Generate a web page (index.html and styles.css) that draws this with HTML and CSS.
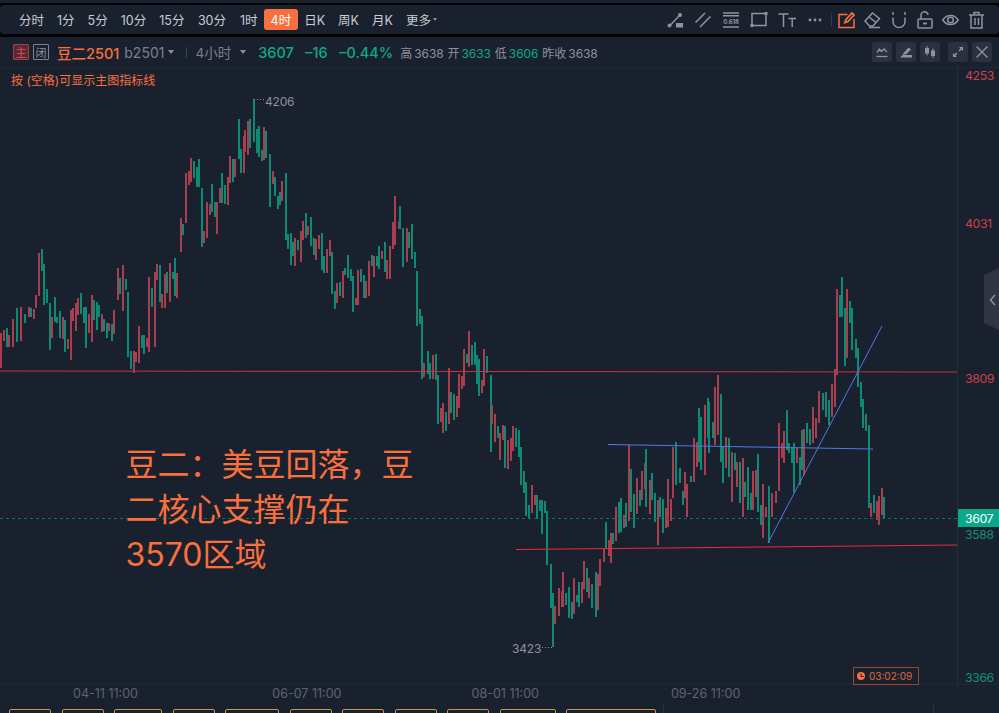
FILE: index.html
```html
<!DOCTYPE html>
<html lang="zh-CN">
<head>
  <meta charset="UTF-8" />
  <title>豆二2501 4小时</title>
  <link rel="stylesheet" href="styles.css">
</head>
<body>
  <div class="page">
    <div class="strip"></div>

    <!-- 周期 + 画线工具 -->
    <div class="toolbar">
      <div class="periods">
        <span class="period">分时</span>
        <span class="period">1分</span>
        <span class="period">5分</span>
        <span class="period">10分</span>
        <span class="period">15分</span>
        <span class="period">30分</span>
        <span class="period">1时</span>
        <span class="period active">4时</span>
        <span class="period">日K</span>
        <span class="period">周K</span>
        <span class="period">月K</span>
        <span class="period">更多<i class="caret small"></i></span>
      </div>
      <div class="tools">
        <div class="tool-group">
          <svg class="tool" width="16" height="16" viewBox="0 0 16 16"><path d="M3 13.500L12.500 3.500" /><circle class="solid" cx="2.500" cy="13.500" r="2" /><circle class="solid" cx="13" cy="3" r="2" /><rect class="solid" x="9" y="11" width="7" height="4.500" /></svg>
          <svg class="tool" width="16" height="16" viewBox="0 0 16 16"><path d="M0.500 10.500L10 1M5 15L15.500 4.500" /></svg>
          <svg class="tool" width="16" height="16" viewBox="0 0 16 16"><path d="M0 1h16M0 3.800h16M0 15h16" /><text class="fib" x="8" y="11.500">0.618</text></svg>
          <svg class="tool" width="18" height="17" viewBox="0 0 18 17"><rect x="2" y="2.500" width="14" height="12" /><rect class="solid" x="0.500" y="13" width="3" height="3" /><rect class="solid" x="14.500" y="1" width="3" height="3" /></svg>
          <svg class="tool" width="18" height="16" viewBox="0 0 18 16"><path d="M0.500 2h10M5.500 2v13M10.500 6.500h7.500M14.200 6.500v8.500" /></svg>
          <svg class="tool" width="14" height="16" viewBox="0 0 14 16"><circle class="solid" cx="2" cy="8" r="1.400" /><circle class="solid" cx="7" cy="8" r="1.400" /><circle class="solid" cx="12" cy="8" r="1.400" /></svg>
        </div>
        <i class="tools-divider"></i>
        <div class="tool-group second">
          <svg class="tool hot" width="18" height="18" viewBox="0 0 18 18"><path d="M9.500 3.500H1v13h15V8" /><path class="fat" d="M7 11.500l1-3 6-6.500 2 2-6 6.500z" /></svg>
          <svg class="tool" width="17" height="18" viewBox="0 0 17 18"><path d="M1 10l7.500-8 7 5.500-6.500 7.500H5.500z" /><path d="M5 6l7 5.500M5 16.500h11" /></svg>
          <svg class="tool" width="14" height="18" viewBox="0 0 14 18"><path d="M1 1v3M13 1v3" /><path d="M1 6.500v4a6 6 0 0 0 12 0v-4" /></svg>
          <svg class="tool" width="16" height="18" viewBox="0 0 16 18"><rect x="1" y="8" width="14" height="9" rx="1" /><path d="M4 8V4.500a3.500 3.500 0 0 1 7-0.500" /><path class="fat" d="M6 12.500h4" /></svg>
          <svg class="tool" width="17" height="18" viewBox="0 0 17 18"><path d="M0.800 9c4-6 11.400-6 15.400 0-4 6-11.400 6-15.400 0z" /><circle cx="8.500" cy="9" r="2.800" /></svg>
          <svg class="tool" width="15" height="18" viewBox="0 0 15 18"><path d="M0 4h15M5 4V1.500h5V4M2 4v13h11V4M6 7v7M9.500 7v7" /></svg>
        </div>
      </div>
    </div>

    <div class="panel">
      <!-- 合约行情 -->
      <div class="quote">
        <span class="badge red">主</span>
        <span class="badge grey">闭</span>
        <span class="name">豆二2501</span>
        <span class="code">b2501</span><i class="caret"></i>
        <i class="quote-divider"></i>
        <span class="span-label">4小时</span><i class="caret wide"></i>
        <strong class="last">3607</strong>
        <strong class="change">–16</strong>
        <strong class="percent">–0.44%</strong>
        <span class="stats">
          <span>高<em>3638</em></span>
          <span>开<em class="down">3633</em></span>
          <span>低<em class="down">3606</em></span>
          <span>昨收<em>3638</em></span>
        </span>
        <span class="quote-btns">
          <span class="qbtn"><svg width="12" height="12" viewBox="0 0 12 12"><path d="M1 6.500l2.500-3.500 2 2.500L8 3l3 3" /><path d="M0.500 10.500h11" /></svg></span>
          <span class="qbtn"><svg width="12" height="12" viewBox="0 0 12 12"><path class="fill" d="M4 6.500l4.500-5 2.500 2-5 5H2.500zM0 11.500l2.500-2.500H12v2.500z" /></svg></span>
          <span class="qbtn"><svg width="12" height="12" viewBox="0 0 12 12"><path class="fill" d="M2.500 0h1v2H5v5.500H3.500v2h-1v-2H1V2h1.500zM8.500 2.500h1v2H11V10H9.500v2h-1v-2H7V4.500h1.500z" /></svg></span>
          <span class="qbtn gap"><svg width="12" height="12" viewBox="0 0 12 12"><path class="fill" d="M11 1v4L9.500 3.500 7.500 5.500 6.500 4.500l2-2L7 1zM1 11V7l1.500 1.500 2-2 1 1-2 2L5 11z" /></svg></span>
          <span class="qbtn"><svg width="12" height="12" viewBox="0 0 12 12"><path d="M0.500 0.500l11 11M11.500 0.500l-11 11" /></svg></span>
        </span>
      </div>

      <!-- K线图 -->
      <div class="chart">
        <svg class="plot" width="999" height="617" viewBox="0 68 999 617">
          <g id="candles"></g>
          <line class="last-line" x1="0" y1="518.500" x2="957" y2="518.500" />
          <line class="level" x1="0" y1="371" x2="957" y2="372" />
          <line class="level bright" x1="516" y1="549.500" x2="957" y2="545" />
          <line class="trend" x1="608" y1="444.500" x2="873" y2="449" />
          <line class="trend" x1="768" y1="543" x2="882" y2="326" />

          <line class="dots" x1="254" y1="99.500" x2="264" y2="99.500" />
          <text class="mark" x="265" y="106">4206</text>
          <line class="dots" x1="542" y1="647.500" x2="553" y2="647.500" />
          <text class="mark" x="512" y="653">3423</text>

          <!-- 价格轴 -->
          <line class="axis-line" x1="957.500" y1="68" x2="957.500" y2="685" />
          <text class="price up" x="965" y="80">4253</text>
          <text class="price up" x="965" y="228">4031</text>
          <text class="price up" x="965" y="383">3809</text>
          <text class="price down" x="965" y="539">3588</text>
          <text class="price down" x="965" y="682">3366</text>
          <rect class="last-tag" x="958" y="509" width="41" height="18" />
          <text class="last-text" x="965" y="522.500">3607</text>

          <!-- 右侧收起 -->
          <path class="drawer" d="M984 275L999 268V330L984 323Z" />
          <path class="drawer-arrow" d="M995 295l-4.500 5 4.500 5" />

          <!-- 倒计时 -->
          <rect class="timer" x="853.500" y="667.500" width="65" height="17" />
          <circle class="timer-dot" cx="861" cy="676" r="4" />
          <path class="timer-hand" d="M861 673.500V676.500H863.500" />
          <text class="timer-text" x="869" y="680">03:02:09</text>
        </svg>
        <p class="hint">按 (空格)可显示主图指标线</p>
        <p class="note">豆二：美豆回落，豆二核心支撑仍在3570区域</p>
      </div>

      <div class="timeline">
        <span>04-11 11:00</span>
        <span>06-07 11:00</span>
        <span>08-01 11:00</span>
        <span>09-26 11:00</span>
      </div>

      <div class="tabs">
        <i class="tab"></i><i class="tab"></i><i class="tab"></i><i class="tab"></i>
        <i class="tab"></i><i class="tab"></i><i class="tab"></i><i class="tab"></i>
        <i class="tab"></i><i class="tab"></i><i class="tab"></i>
        <i class="tabs-divider first"></i>
        <i class="tabs-divider"></i>
      </div>
    </div>
  </div>

  <script src="chart.js"></script>
</body>
</html>
```

FILE: styles.css
```css
/* Reset & base */
* {
  box-sizing: border-box;
}
body {
  margin: 0;
  background: #000;
  color: #8d929b;
  font-family: Inter, "Noto Sans CJK SC", sans-serif;
  overflow: hidden;
}
i, em {
  font-style: normal;
}

.page {
  display: flex;
  flex-direction: column;
  width: 999px;
  height: 713px;
  overflow: hidden;
}
.strip {
  height: 3px;
  background: #1a212e;
}

/* Toolbar */
.toolbar {
  display: flex;
  align-items: center;
  justify-content: space-between;
  height: 29px;
  margin-top: 2px;
  padding: 0 9.500px 0 12.500px;
  background: #1a212e;
  border-radius: 4px;
}
.periods {
  display: flex;
  align-items: center;
}
.period {
  display: flex;
  align-items: center;
  height: 21px;
  padding: 0 6.500px;
  font-size: 12.500px;
  color: #c9ccd1;
  white-space: nowrap;
}
.period:nth-child(6) {
  margin-left: 0.500px;
}
.period:nth-child(7) {
  margin-left: 1px;
}
.period.active {
  background: #f96f3d;
  border-radius: 3px;
  color: #fff;
}
.caret {
  display: inline-block;
  margin-left: 4px;
  border: 3px solid transparent;
  border-top: 4px solid #8d929b;
  border-bottom: 0;
}
.caret.small {
  margin-left: 2px;
  border-width: 3px 2.500px 0;
}
.caret.wide {
  margin-left: 9px;
}

.tools {
  display: flex;
  align-items: center;
}
.tool-group {
  display: grid;
  grid-auto-flow: column;
  grid-auto-columns: 28px;
  justify-items: center;
  align-items: center;
}
.tool-group.second {
  grid-auto-columns: 26px;
}
.tool {
  fill: none;
  stroke: #8f949d;
  stroke-width: 1.500;
}
.tool .solid {
  fill: #8f949d;
  stroke: none;
}
.tool .fib {
  fill: #8f949d;
  stroke: none;
  font-size: 6px;
  font-weight: 700;
  letter-spacing: -0.100px;
  text-anchor: middle;
}
.tool.hot {
  stroke: #f96f3d;
}
.tool .fat {
  stroke-width: 1.800;
}
.tools-divider {
  width: 1px;
  height: 13px;
  margin: 0 2px;
  background: #333b48;
}

/* Quote row */
.panel {
  flex: 1;
  display: flex;
  flex-direction: column;
  margin-top: 3px;
  background: #1a212e;
  min-height: 0;
}
.quote {
  display: flex;
  align-items: center;
  flex: none;
  height: 31px;
  padding-left: 13px;
  border-bottom: 1px solid #1f2835;
  white-space: nowrap;
}
.badge {
  display: flex;
  align-items: center;
  justify-content: center;
  width: 16px;
  height: 16px;
  margin-right: 4px;
  font-size: 11px;
  border: 1px solid;
  border-radius: 1px;
}
.badge.red {
  background: #5a2a33;
  border-color: #a83c48;
  color: #d9545f;
}
.badge.grey {
  border-color: #7d828b;
  color: #8d929b;
}
.name {
  margin-left: 4px;
  font-size: 14.500px;
  font-weight: 500;
  color: #f96f3d;
}
.code {
  margin-left: 5px;
  font-size: 14px;
  color: #7b808a;
}
.quote-divider {
  width: 1px;
  height: 11px;
  margin: 0 8px 0 12px;
  background: #3a424f;
}
.span-label {
  font-size: 13.500px;
  color: #7b808a;
}
.last, .change, .percent {
  margin-left: 11.500px;
  font-size: 14.500px;
  font-weight: 500;
  color: #0ea78a;
}
.last {
  margin-left: 12px;
}
.stats {
  display: flex;
  gap: 4px;
  margin-left: 7px;
  font-size: 12px;
  color: #8d929b;
}
.stats em {
  margin-left: 2px;
  letter-spacing: -0.100px;
}
.stats .down {
  color: #0ea78a;
}
.quote-btns {
  display: flex;
  gap: 4px;
  margin-left: auto;
  padding-right: 7px;
}
.qbtn {
  display: flex;
  align-items: center;
  justify-content: center;
  width: 20px;
  height: 20px;
  background: #2a3240;
  border-radius: 3px;
}
.qbtn.gap {
  margin-left: 4px;
}
.qbtn svg {
  fill: none;
  stroke: #8f949d;
  stroke-width: 1.300;
}
.qbtn .fill {
  fill: #8f949d;
  stroke: none;
}

/* Chart */
.chart {
  position: relative;
  flex: none;
  height: 617px;
  border-bottom: 1px solid #1f2835;
}
.plot {
  display: block;
  font-family: Inter, sans-serif;
}
.bar-r {
  fill: #a83f4e;
}
.bar-g {
  fill: #0c8a73;
}
.last-line {
  stroke: #0d6f60;
  stroke-dasharray: 3 3;
}
.level {
  stroke: #c83245;
}
.level.bright {
  stroke: #ee2a3e;
}
.trend {
  stroke: #5179e6;
}
.dots {
  stroke: #8d929b;
  stroke-dasharray: 1 2;
}
.mark {
  font-size: 12px;
  letter-spacing: -0.200px;
  fill: #8d929b;
}
.axis-line {
  stroke: #252e3b;
}
.price {
  font-size: 12.300px;
  letter-spacing: -0.400px;
}
.price.up {
  fill: #c8424f;
}
.price.down {
  fill: #0e8f78;
}
.last-tag {
  fill: #0aa88a;
}
.last-text {
  font-size: 12.300px;
  letter-spacing: -0.400px;
  fill: #fff;
}
.drawer {
  fill: #2f3542;
}
.drawer-arrow {
  fill: none;
  stroke: #8f949d;
  stroke-width: 1.500;
}
.timer {
  fill: none;
  stroke: #96492f;
}
.timer-dot {
  fill: #f96f3d;
}
.timer-hand {
  fill: none;
  stroke: #1a212e;
}
.timer-text {
  font-size: 10px;
  fill: #e0683a;
}
.hint {
  position: absolute;
  left: 11px;
  top: 5px;
  margin: 0;
  font-size: 12px;
  line-height: 16px;
  color: #f96f3d;
}
.note {
  position: absolute;
  left: 125.500px;
  top: 374px;
  width: 300px;
  margin: 0;
  font-size: 32px;
  line-height: 45px;
  color: #f96f3d;
}

/* Time axis */
.timeline {
  display: grid;
  grid-template-columns: repeat(4, 199.300px);
  flex: none;
  height: 24px;
  padding-left: 73px;
  font-size: 12.500px;
  line-height: 18px;
  color: #5d6470;
  font-family: Inter, sans-serif;
}

/* Bottom tabs, cut off by the window */
.tabs {
  position: relative;
  display: flex;
  gap: 10.500px;
  flex: 1;
  padding-left: 9px;
}
.tab {
  height: 10px;
  border: 1px solid #c9974a;
  border-radius: 2px 2px 0 0;
  width: 42px;
}
.tab:nth-child(3) { width: 48px; }
.tab:nth-child(5) { width: 54px; }
.tab:nth-child(10) { width: 56px; }
.tab:nth-child(11) { width: 90px; }
.tabs-divider {
  position: absolute;
  left: 933px;
  top: -4px;
  width: 1px;
  height: 10px;
  background: #2c3441;
}
.tabs-divider.first {
  left: 663px;
}
```

FILE: chart.js
```js
// x, top, bottom per bar, read off the picture
const BARS = `
0 333 368 r,3 330 341 r,6 328 347 g,8 335 347 r,12 319 347 r,16 308 342 g,20 307 341 r,24 314 323 g,
28 307 317 r,30 308 317 g,33 309 319 r,35 295 308 r,38 253 296 r,41 249 271 g,43 264 305 g,46 289 303 g,
49 303 350 g,51 317 338 r,54 297 322 g,56 317 323 g,59 311 338 g,62 317 339 r,64 320 352 g,67 339 349 r,
70 310 360 r,72 308 321 r,75 303 331 r,77 298 315 r,80 293 314 g,83 307 323 g,85 307 348 g,88 314 333 r,
91 295 342 r,93 300 320 g,96 302 330 g,98 305 317 g,101 314 332 r,103 319 331 g,106 323 338 g,108 323 331 r,
111 324 341 g,113 310 334 r,117 268 300 r,119 278 294 g,122 265 311 r,125 279 290 g,127 292 357 g,130 351 369 g,
133 351 373 r,135 352 362 r,138 326 363 r,141 335 348 g,143 335 354 g,146 338 347 r,148 277 352 r,151 288 307 g,
154 272 347 r,156 264 280 r,159 265 302 g,161 294 308 r,164 274 308 r,166 272 293 g,169 263 302 r,172 272 279 g,
174 258 296 g,176 273 298 r,180 218 252 r,182 224 235 g,185 173 223 r,188 171 185 r,190 158 182 r,193 161 178 g,
196 167 187 g,198 159 187 g,201 188 247 g,203 231 243 r,206 202 238 r,209 204 215 r,211 184 212 g,214 202 217 g,
216 202 234 r,219 188 203 r,221 173 203 g,224 185 204 g,227 177 205 r,229 156 183 r,232 159 182 g,234 159 177 r,
238 119 159 g,240 149 173 g,243 136 173 r,244 130 152 r,247 121 155 r,249 119 148 g,253 99 142 g,256 129 153 g,
258 126 157 g,261 150 161 g,263 127 160 r,265 131 158 g,269 154 207 g,272 171 184 r,274 177 196 g,277 196 209 g,
279 192 205 g,281 181 201 r,285 173 240 g,287 234 249 g,290 233 265 g,292 242 256 g,294 238 266 r,297 240 250 g,
300 231 262 r,302 221 240 r,305 213 238 g,307 226 235 r,310 217 246 g,313 238 255 g,315 239 260 r,318 235 249 r,
321 233 270 g,323 256 273 g,326 249 273 r,329 240 256 r,331 252 294 g,334 291 309 g,336 283 303 r,339 282 296 g,
342 271 298 r,344 268 275 g,347 255 278 g,350 269 281 g,352 276 312 g,355 298 305 r,357 270 305 r,360 269 282 g,
363 275 298 g,365 281 298 r,368 261 296 r,371 255 266 g,373 256 277 r,376 256 266 g,378 246 269 g,381 251 259 r,
384 242 272 g,386 260 279 r,389 246 279 r,392 222 249 r,394 196 245 r,398 221 229 r,399 206 229 g,402 228 267 g,
406 228 262 r,408 232 248 g,411 224 259 g,414 252 268 g,416 271 326 g,419 309 324 g,421 316 379 g,423 363 377 r,
427 351 374 g,429 363 379 g,432 355 379 r,435 354 380 g,437 375 424 g,440 408 422 r,442 403 433 r,445 412 431 g,
448 368 424 r,450 392 413 g,453 394 420 g,456 396 417 r,458 374 408 r,461 376 389 r,463 349 386 r,466 354 363 g,
468 331 367 r,471 345 365 g,474 342 365 g,476 355 384 g,478 359 396 g,481 380 393 r,483 349 386 r,486 356 373 g,
490 375 452 g,491 405 424 r,494 414 442 r,497 426 438 g,499 433 460 r,502 425 440 r,504 426 468 g,507 440 469 r,
510 438 461 r,512 426 451 r,515 428 447 g,518 430 457 g,520 447 485 g,523 471 493 g,525 482 516 g,528 505 519 g,
531 485 513 r,534 495 505 r,536 495 519 g,539 500 511 g,541 500 534 g,544 501 513 g,546 511 565 g,550 564 608 g,
552 593 647 g,554 606 624 r,558 588 616 r,561 591 607 r,562 572 607 r,565 593 605 g,568 587 618 g,571 602 619 g,
573 578 614 r,576 595 602 g,578 582 607 g,581 582 603 r,583 561 589 r,586 568 592 g,588 578 598 r,591 584 608 g,
595 572 617 g,597 574 610 r,599 559 586 r,603 549 562 r,605 522 548 g,608 540 556 r,610 533 563 r,612 533 544 g,
615 507 541 r,618 502 533 g,620 498 532 g,623 515 528 r,625 503 527 g,628 445 521 r,630 469 512 g,633 494 528 g,
636 478 514 r,639 490 506 g,641 471 500 r,644 463 489 r,645 449 507 g,649 480 514 r,651 473 500 g,654 493 522 g,
657 500 545 r,659 497 517 g,662 499 533 g,665 508 528 r,667 479 527 r,670 499 521 r,672 447 498 r,675 442 485 g,
679 468 483 g,682 491 505 g,684 472 498 r,686 484 517 r,690 476 482 g,693 438 482 r,696 442 467 r,698 408 462 g,
700 417 470 g,704 405 475 r,707 398 438 g,708 402 453 g,712 422 438 g,714 387 445 r,717 375 435 r,720 394 462 g,
722 447 483 g,725 437 468 r,728 438 477 g,731 452 502 r,734 453 470 g,736 462 487 r,739 462 503 g,742 458 517 r,
744 482 497 g,747 467 510 g,750 493 510 g,752 471 510 r,755 470 497 r,757 454 512 g,760 505 525 g,762 484 538 r,
765 507 517 r,768 486 543 g,771 493 517 r,775 491 503 r,778 423 491 r,781 443 458 r,783 431 463 r,786 410 450 g,
788 443 453 g,791 448 463 g,793 443 493 g,796 448 463 r,799 457 485 g,801 430 470 g,803 429 475 r,806 423 443 g,
809 429 445 g,812 407 443 r,815 418 438 r,818 391 423 r,822 393 410 g,825 392 417 g,828 400 425 g,831 384 417 r,
834 369 407 r,836 289 375 r,839 295 317 g,841 277 317 g,844 308 366 g,846 289 358 r,849 301 323 g,851 308 350 g,
855 339 358 g,857 348 387 g,860 382 407 g,862 399 428 g,865 414 431 g,868 425 508 g,870 503 517 r,873 495 513 g,
876 501 520 r,878 496 525 r,881 488 515 r,883 497 518 g`;

const NS = 'http://www.w3.org/2000/svg';
const group = document.getElementById('candles');

BARS.split(',').forEach(item => {
  const [x, top, bottom, color] = item.trim().split(' ');
  const bar = document.createElementNS(NS, 'rect');
  bar.setAttribute('x', x);
  bar.setAttribute('y', top);
  bar.setAttribute('width', 2);
  bar.setAttribute('height', bottom - top);
  bar.setAttribute('class', 'bar-' + color);
  group.appendChild(bar);
});
```
